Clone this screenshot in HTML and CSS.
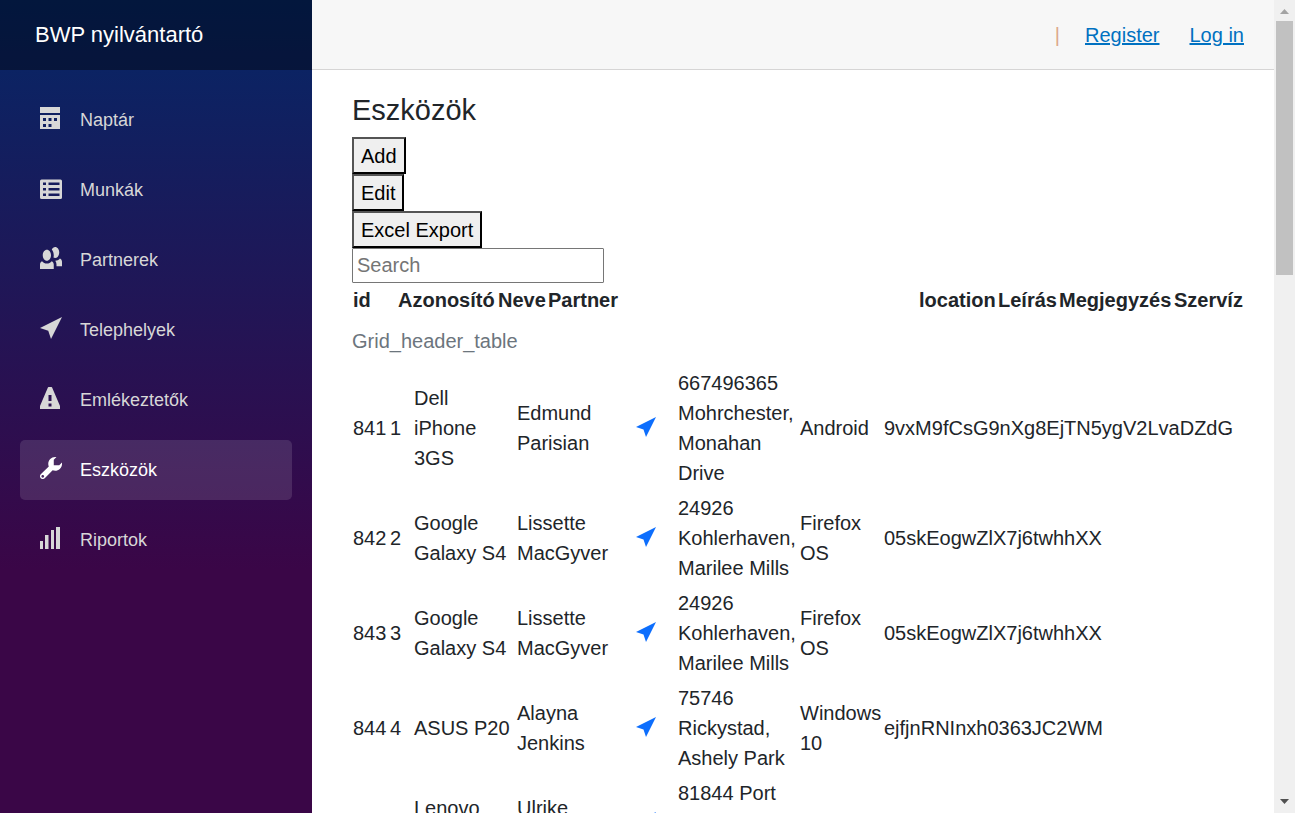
FILE: index.html
```html
<!DOCTYPE html>
<html lang="hu">
<head>
<meta charset="utf-8">
<title>BWP nyilvántartó</title>
<link rel="stylesheet" href="styles.css">
</head>
<body>
<svg class="sprite" aria-hidden="true">
  <symbol id="location" viewBox="0 0 8 8"><path d="M8 0l-8 4 3 1 1 3 4-8z"/></symbol>
</svg>
<div class="page">
  <aside class="sidebar">
    <div class="brand-row"><a class="brand" href="#">BWP nyilvántartó</a></div>
    <nav class="nav">
      <a class="nav-link" href="#"><svg class="icon" viewBox="0 0 22 22"><path fill-rule="evenodd" d="M0 0h20v6H0zM0 8h20v14H0zM3 11v3h3v-3zM8.500 11v3h3v-3zM14 11v3h3v-3zM3 17v3h3v-3zM8.500 17v3h3v-3z"/></svg>Naptár</a>
      <a class="nav-link" href="#"><svg class="icon" viewBox="0 0 22 22"><path fill-rule="evenodd" d="M1.500 2.500h19a1.500 1.500 0 0 1 1.500 1.500v16.500a1.500 1.500 0 0 1-1.500 1.500h-19a1.500 1.500 0 0 1-1.500-1.500v-16.500a1.500 1.500 0 0 1 1.500-1.500zM3 5.500v2.500h3v-2.500zM8.500 5.500v2.500h11v-2.500zM3 11v2.500h3v-2.500zM8.500 11v2.500h11v-2.500zM3 16.500v2.500h3v-2.500zM8.500 16.500v2.500h11v-2.500z"/></svg>Munkák</a>
      <a class="nav-link" href="#"><svg class="icon" viewBox="0 0 8 8"><path d="M5.5 0c-.51 0-.95.35-1.22.88.45.54.72 1.28.72 2.13 0 .29-.03.55-.09.81.19.11.38.19.59.19.83 0 1.5-.9 1.5-2s-.67-2-1.5-2zm-3 1c-.83 0-1.5.9-1.5 2s.67 2 1.5 2 1.5-.9 1.5-2-.67-2-1.5-2zm4.750 3.160c-.43.51-1.020.82-1.690.84.27.38.44.84.44 1.340v.66h2v-1.660c0-.52-.31-.97-.75-1.190zm-6.500 1c-.44.22-.75.67-.75 1.190v1.660h5v-1.660c0-.52-.31-.97-.75-1.190-.45.53-1.060.84-1.750.84s-1.300-.32-1.750-.84z"/></svg>Partnerek</a>
      <a class="nav-link" href="#"><svg class="icon"><use href="#location"/></svg>Telephelyek</a>
      <a class="nav-link" href="#"><svg class="icon" viewBox="0 0 22 22"><path fill-rule="evenodd" d="M8.500 0h3q.4 0 .6.500l7.700 18q.2.500.2 1v2.500H0v-2.500q0-.5.200-1l7.700-18q.2-.5.600-.5zM8.500 8v6h3v-6zM8.500 16.500v3h3v-3z"/></svg>Emlékeztetők</a>
      <a class="nav-link active" href="#"><svg class="icon" viewBox="0 0 8 8"><path d="M5.5 0c-1.38 0-2.5 1.12-2.5 2.5 0 .32.08.62.19.91l-2.91 2.88c-.39.39-.39 1.05 0 1.44.2.2.46.28.72.28.26 0 .52-.09.72-.28l2.88-2.91c.28.11.58.19.91.19 1.38 0 2.5-1.12 2.5-2.5 0-.16 0-.32-.03-.47l-.97.97h-2v-2l.97-.97c-.15-.03-.31-.03-.47-.03zm-4.5 6.5c.28 0 .5.22.5.5s-.22.5-.5.5-.5-.22-.5-.5.22-.5.5-.5z"/></svg>Eszközök</a>
      <a class="nav-link" href="#"><svg class="icon" viewBox="0 0 22 22"><path d="M0 14h3v8H0zM5 8h3.500v14H5zM11 3h3v19h-3zM16 0h4v22h-4z"/></svg>Riportok</a>
    </nav>
  </aside>
  <main class="main">
    <header class="top-row">
      <span class="divider">|</span>
      <a href="#">Register</a>
      <a href="#">Log in</a>
    </header>
    <section class="content">
      <h1 class="title">Eszközök</h1>
      <div class="toolbar">
        <button type="button" class="tool">Add</button>
        <button type="button" class="tool">Edit</button>
        <button type="button" class="tool">Excel Export</button>
        <input class="search" type="text" placeholder="Search" aria-label="Search">
      </div>
      <table class="grid">
        <caption>Grid_header_table</caption>
        <colgroup><col class="h-id"><col class="h-code"><col class="h-name"><col><col class="h-location"><col class="h-desc"><col class="h-note"><col class="h-service"></colgroup>
        <thead>
          <tr><th>id</th><th>Azonosító</th><th>Neve</th><th>Partner</th><th>location</th><th>Leírás</th><th>Megjegyzés</th><th>Szervíz</th></tr>
        </thead>
      </table>
      <table class="grid">
        <colgroup><col class="c-id"><col class="c-code"><col class="c-name"><col class="c-partner"><col class="c-pin"><col class="c-address"><col class="c-desc"><col></colgroup>
        <tbody>
          <tr><td>841</td><td>1</td><td>Dell iPhone 3GS</td><td>Edmund Parisian</td><td><a href="#" aria-label="location"><svg class="pin"><use href="#location"/></svg></a></td><td>667496365 Mohrchester, Monahan Drive</td><td>Android</td><td>9vxM9fCsG9nXg8EjTN5ygV2LvaDZdG</td></tr>
          <tr><td>842</td><td>2</td><td>Google Galaxy S4</td><td>Lissette MacGyver</td><td><a href="#" aria-label="location"><svg class="pin"><use href="#location"/></svg></a></td><td>24926 Kohlerhaven, Marilee Mills</td><td>Firefox OS</td><td>05skEogwZlX7j6twhhXX</td></tr>
          <tr><td>843</td><td>3</td><td>Google Galaxy S4</td><td>Lissette MacGyver</td><td><a href="#" aria-label="location"><svg class="pin"><use href="#location"/></svg></a></td><td>24926 Kohlerhaven, Marilee Mills</td><td>Firefox OS</td><td>05skEogwZlX7j6twhhXX</td></tr>
          <tr><td>844</td><td>4</td><td>ASUS P20</td><td>Alayna Jenkins</td><td><a href="#" aria-label="location"><svg class="pin"><use href="#location"/></svg></a></td><td>75746 Rickystad, Ashely Park</td><td>Windows 10</td><td>ejfjnRNInxh0363JC2WM</td></tr>
          <tr><td></td><td></td><td>Lenovo<br>&nbsp;</td><td>Ulrike<br>&nbsp;</td><td><a href="#" aria-label="location"><svg class="pin"><use href="#location"/></svg></a></td><td>81844 Port<br>&nbsp;<br>&nbsp;</td><td></td><td></td></tr>
        </tbody>
      </table>
    </section>
  </main>
  <div class="scrollbar" aria-hidden="true">
    <svg class="arrow arrow-up" viewBox="0 0 9 5"><path d="M0 5L4.500 0L9 5z"/></svg>
    <div class="track"><div class="thumb"></div></div>
    <svg class="arrow arrow-down" viewBox="0 0 9 5"><path d="M0 0h9L4.500 5z"/></svg>
  </div>
</div>
</body>
</html>
```
FILE: styles.css
```css
*, *::before, *::after { box-sizing: border-box; }

body {
  margin: 0;
  font-family: "Liberation Sans", Arial, sans-serif;
  font-size: 20px;
  line-height: 30px;
  color: #212529;
  background: #fff;
}

.sprite { display: none; }

.page {
  display: flex;
  height: 100vh;
  overflow: hidden;
}

/* Sidebar */
.sidebar {
  flex: 0 0 312px;
  background-image: linear-gradient(180deg, #052767 0%, #3a0647 70%);
}

.brand-row {
  display: flex;
  align-items: center;
  height: 70px;
  padding: 0 35px;
  background: rgba(0, 0, 0, .4);
}

.brand {
  font-size: 22px;
  color: #fff;
  text-decoration: none;
}

.nav {
  display: grid;
  gap: 10px;
  padding: 20px;
}

.nav-link {
  display: flex;
  align-items: center;
  height: 60px;
  padding: 0 20px;
  border-radius: 5px;
  font-size: 18px;
  color: #d7d7d7;
  text-decoration: none;
}

.nav-link.active {
  color: #fff;
  background: rgba(255, 255, 255, .12);
}

.icon {
  width: 22px;
  height: 22px;
  margin: 0 18px 4px 0;
  fill: currentColor;
}

/* Main column */
.main {
  flex: 1;
  min-width: 0;
  overflow: hidden;
}

.top-row {
  display: flex;
  align-items: center;
  justify-content: flex-end;
  gap: 30px;
  height: 70px;
  padding: 0 30px;
  background: #f7f7f7;
  border-bottom: 1px solid #d6d5d5;
}

.top-row a { color: #0071c1; }

.divider {
  margin-right: -5px;
  color: #dca98a;
}

.content { padding: 23px 30px 0 40px; }

.title {
  margin: 0 0 9px;
  font-size: 29px;
  font-weight: 400;
  line-height: 35px;
}

.toolbar {
  display: grid;
  justify-items: start;
}

.tool {
  height: 37px;
  padding: 0 7px;
  border: 2px outset #000;
  border-radius: 0;
  font: inherit;
  color: #000;
  background: #efefef;
}

.search {
  width: 252px;
  height: 35px;
  padding: 0 4px;
  border: 1px solid #767676;
  border-radius: 1px;
  font: inherit;
}

.search::placeholder { color: #757575; }

/* Grid */
.grid {
  width: 100%;
  table-layout: fixed;
  border-collapse: collapse;
}

.grid caption {
  caption-side: bottom;
  padding: 8px 0 10px;
  color: #6c757d;
  text-align: left;
}

.grid th, .grid td {
  padding: 2px 1px 3px;
  text-align: left;
  vertical-align: middle;
}

.h-id { width: 45px; }
.h-code { width: 100px; }
.h-name { width: 50px; }
.h-location { width: 79px; }
.h-desc { width: 61px; }
.h-note { width: 115px; }
.h-service { width: 71px; }

.c-id { width: 37px; }
.c-code { width: 24px; }
.c-name { width: 103px; }
.c-partner { width: 119px; }
.c-pin { width: 42px; }
.c-address { width: 122px; }
.c-desc { width: 84px; }

.pin {
  display: block;
  width: 20px;
  height: 20px;
  margin-bottom: 2px;
  fill: #0d6efd;
}

/* Scrollbar */
.scrollbar {
  display: flex;
  flex: 0 0 21px;
  flex-direction: column;
  align-items: center;
  padding: 9px 2px;
  background: #f0f0f0;
}

.arrow { width: 9px; height: 5px; }
.arrow-up { fill: #a3a3a3; }
.arrow-down { fill: #505050; }

.track {
  flex: 1;
  width: 100%;
  padding: 7px 0;
}

.thumb {
  height: 33%;
  background: #c1c1c1;
}
```
